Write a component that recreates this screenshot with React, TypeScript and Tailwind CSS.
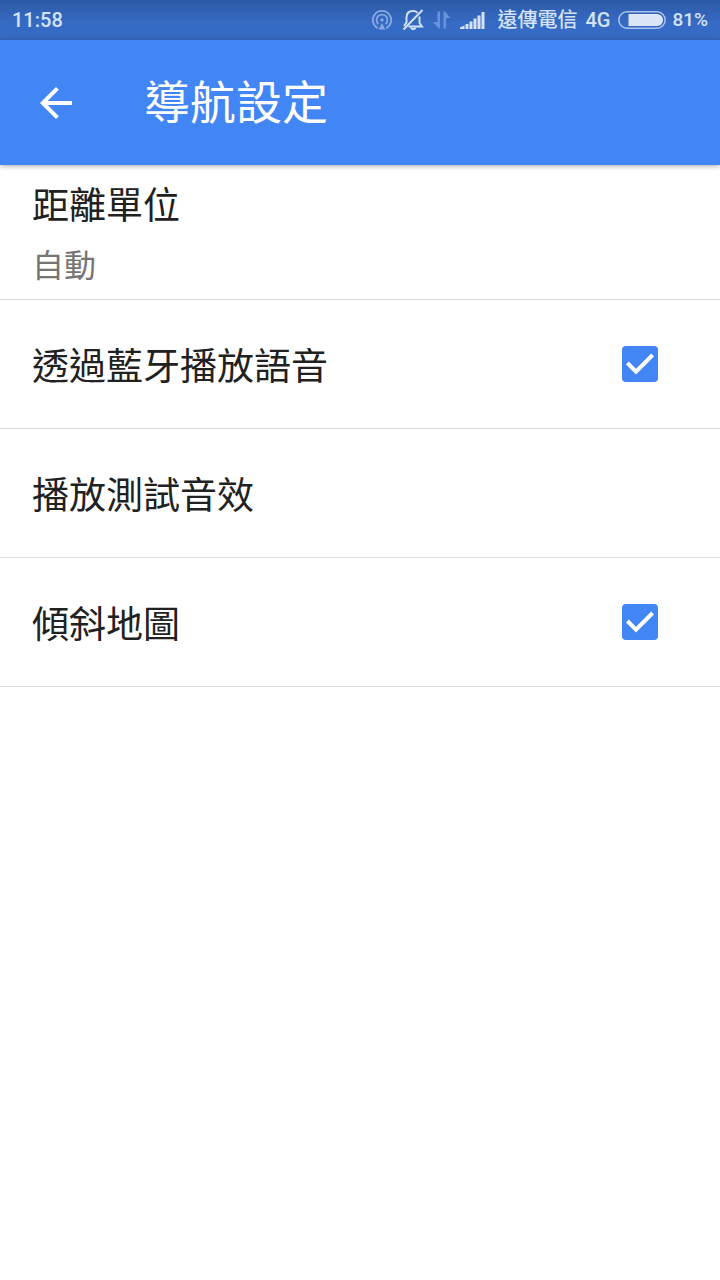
import React, { useState } from "react";

interface rowProps {
  label: string;
  checked: boolean;
  onChange: (value: boolean) => void;
}

function HotspotIcon() {
  return (
    <svg className="size-[22px]" viewBox="0 0 22 22" fill="none" stroke="#87a9e2" strokeWidth="1.8">
      <path d="M6.8 19.2A9.2 9.2 0 1 1 15.2 19.2" />
      <path d="M7.4 15A5.4 5.4 0 1 1 14.6 15" />
      <path d="M11 14 14.4 20.5H7.6Z" fill="#87a9e2" stroke="none" />
      <circle cx="11" cy="11" r="1.7" fill="#87a9e2" stroke="none" />
    </svg>
  );
}

function MutedBellIcon() {
  return (
    <svg className="size-[22px]" viewBox="0 0 22 22" fill="none" stroke="#d5e3fa" strokeWidth="1.9">
      <path d="M4.5 14V8.500C4.500 4.500 7 2 11 2C13 2 14.500 2.600 15.600 3.800" />
      <path d="M17.500 7.500V14L20 17.500H6.500" />
      <path d="M4.500 13.500 2 17" />
      <path d="M9 18.500C9.500 20.800 13 20.800 13.500 18.500" />
      <path d="M20.500 1 1.500 20.500" />
    </svg>
  );
}

function DataIcon() {
  return (
    <svg className="size-[18px]" viewBox="0 0 18 18" fill="#6a92d8">
      <path d="M4.500 0.500H7V17.500H5.500L0 11H4.500Z" />
      <path d="M10.500 17.500H13V7H17.500L12 0.500H10.500Z" />
    </svg>
  );
}

function SignalIcon() {
  return (
    <svg className="h-[18px] w-[25px]" viewBox="0 0 25 18" fill="#d5e3fa">
      <path d="M0 18V16.500L4.500 14.500V18Z" />
      <rect x="5.500" y="13" width="3" height="5" />
      <rect x="9.500" y="10.500" width="3" height="7.500" />
      <rect x="13.500" y="7.500" width="3" height="10.500" />
      <rect x="17.500" y="4.500" width="3" height="13.500" />
      <rect x="21.500" y="1" width="3" height="17" />
    </svg>
  );
}

function BatteryIcon() {
  return (
    <svg className="h-[18px] w-12" viewBox="0 0 48 18" fill="none">
      <rect x="0.800" y="0.800" width="46.400" height="16.400" rx="8.200" stroke="#a9c4f0" strokeWidth="1.500" />
      <path d="M10.500 3H39A6 6 0 0 1 39 15H10.500Z" fill="#dbe6f8" />
    </svg>
  );
}

function StatusBar() {
  return (
    <div className="flex h-10 items-center justify-between bg-linear-to-b from-[#2d5aa6] to-[#366bc5] to-60% px-3 font-[Roboto,'Noto_Sans_CJK_TC',sans-serif] text-xl leading-6 font-medium text-[#d5e3fa]">
      <span>11:58</span>
      <div className="flex items-center">
        <div className="flex items-center gap-[9px]">
          <HotspotIcon />
          <MutedBellIcon />
          <DataIcon />
          <SignalIcon />
        </div>
        <span className="ml-3">遠傳電信</span>
        <span className="mx-2">4G</span>
        <BatteryIcon />
        <span className="ml-[6px] text-[19px] leading-6">81%</span>
      </div>
    </div>
  );
}

function CheckRow({ label, checked, onChange }: rowProps) {
  return (
    <label className="flex h-[129px] items-center justify-between border-b border-[#dedede] pr-[62px] pl-8">
      <span>{label}</span>
      <span className="grid">
        <input
          type="checkbox"
          checked={checked}
          onChange={(e) => onChange(e.target.checked)}
          className="col-start-1 row-start-1 size-9 appearance-none rounded-[4px] border-4 border-[#757575] checked:border-[#4285f4] checked:bg-[#4285f4]"
        />
        {checked && (
          <svg
            className="pointer-events-none col-start-1 row-start-1 size-9"
            viewBox="0 0 36 36"
            fill="none"
            stroke="#fff"
            strokeWidth="4"
            aria-hidden="true"
          >
            <path d="M5.400 17 14 25.600 30.600 9" />
          </svg>
        )}
      </span>
    </label>
  );
}

export default function App() {
  const [bluetooth, setBluetooth] = useState(true);
  const [tilt, setTilt] = useState(true);

  return (
    <div className="min-h-screen bg-white font-['Noto_Sans_CJK_TC',sans-serif]">
      <StatusBar />
      <header className="relative flex h-[125px] items-center bg-[#4285f4] pl-8 text-white shadow-[0_1px_5px_rgba(0,0,0,0.35)]">
        <button type="button" aria-label="返回">
          <svg className="size-12" viewBox="0 0 24 24" fill="currentColor">
            <path d="M20 11H7.830l5.590-5.590L12 4l-8 8 8 8 1.410-1.410L7.830 13H20v-2z" />
          </svg>
        </button>
        <h1 className="ml-16 pb-2 text-[46px] leading-[60px]">導航設定</h1>
      </header>
      <main className="text-[37px] leading-[52px] text-[#212121]">
        <button
          type="button"
          className="flex h-[135px] w-full flex-col border-b border-[#dedede] px-8 pt-3 text-left"
        >
          <span>距離單位</span>
          <span className="mt-2 text-[32px] leading-[52px] text-[#757575]">自動</span>
        </button>
        <CheckRow label="透過藍牙播放語音" checked={bluetooth} onChange={setBluetooth} />
        <button
          type="button"
          className="flex h-[129px] w-full items-center border-b border-[#dedede] px-8 text-left"
        >
          播放測試音效
        </button>
        <CheckRow label="傾斜地圖" checked={tilt} onChange={setTilt} />
      </main>
    </div>
  );
}
